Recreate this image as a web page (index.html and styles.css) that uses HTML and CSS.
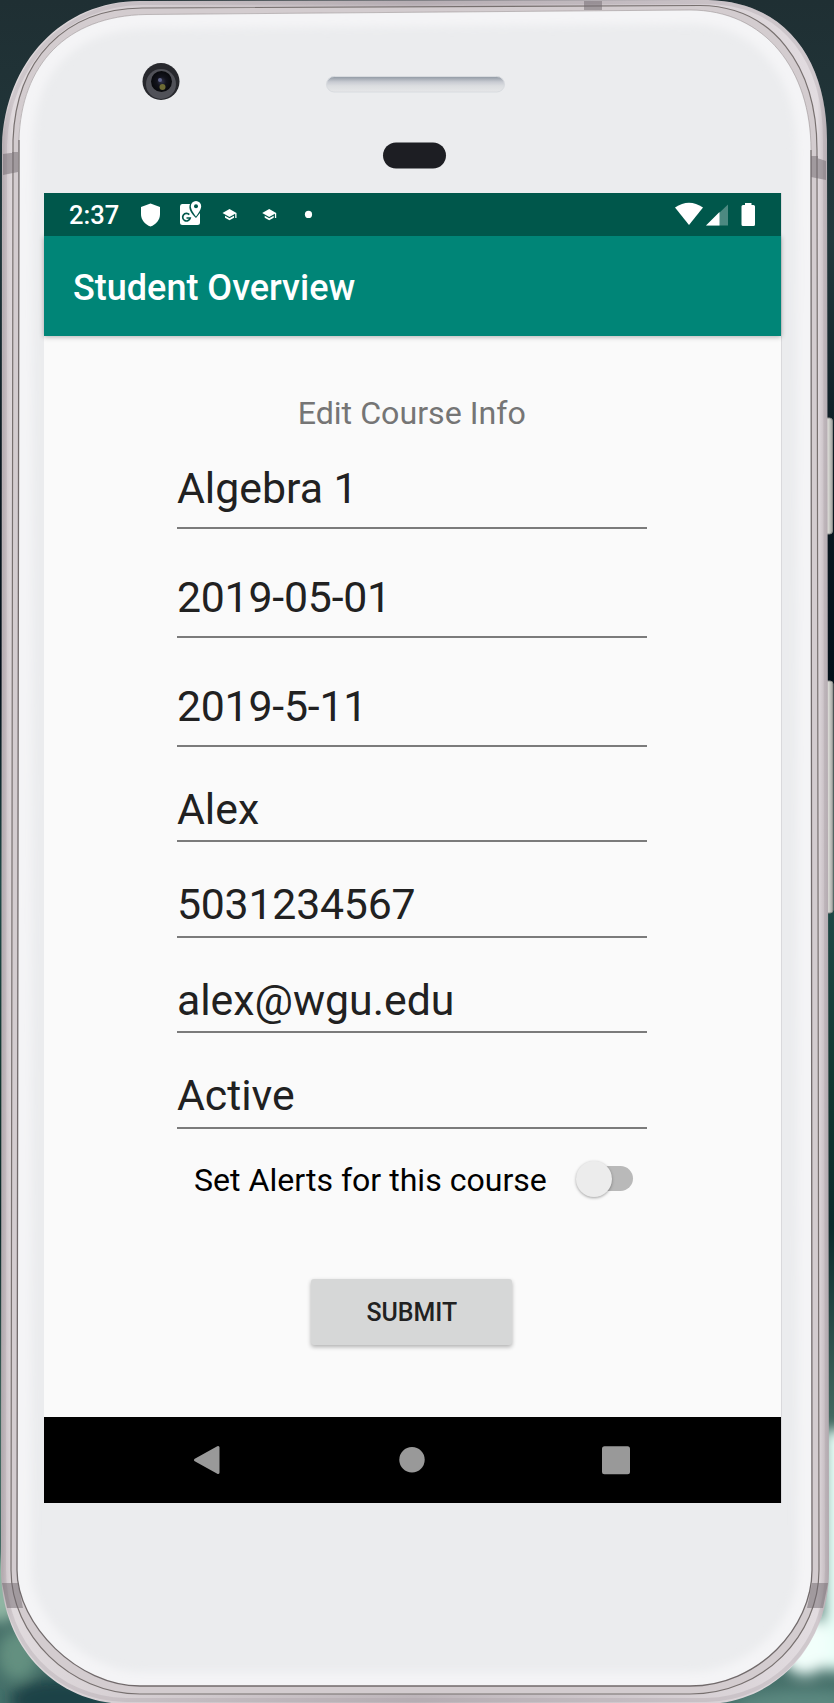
FILE: index.html
```html
<!DOCTYPE html>
<html lang="en">
<head>
<meta charset="utf-8">
<title>Student Overview</title>
<link rel="stylesheet" href="styles.css">
</head>
<body>
<div class="stage">
<svg class="device" width="834" height="1703" viewBox="0 0 834 1703" aria-hidden="true">
  <defs>
    <linearGradient id="wall" x1="0" y1="0" x2="0" y2="1">
      <stop offset="0" stop-color="#1f2f33"/><stop offset=".14" stop-color="#22393d"/><stop offset=".27" stop-color="#0c1a22"/><stop offset=".4" stop-color="#03101a"/>
      <stop offset=".52" stop-color="#204a48"/><stop offset=".64" stop-color="#123630"/><stop offset=".72" stop-color="#0d2a2b"/><stop offset=".83" stop-color="#42675f"/><stop offset="1" stop-color="#45706a"/>
    </linearGradient>
    <linearGradient id="metal" x1="0" y1="0" x2="1" y2="0">
      <stop offset="0" stop-color="#b3a9ad"/><stop offset=".006" stop-color="#cfc7cb"/><stop offset=".014" stop-color="#e0dadd"/><stop offset=".5" stop-color="#bdb5ba"/>
      <stop offset=".986" stop-color="#e2dce0"/><stop offset="1" stop-color="#b9afb4"/>
    </linearGradient>
    <filter id="soft" x="-5%" y="-5%" width="110%" height="110%"><feGaussianBlur stdDeviation="4"/></filter>
    <filter id="blur" x="-50%" y="-50%" width="200%" height="200%"><feGaussianBlur stdDeviation="7"/></filter>
    <linearGradient id="slot" x1="0" y1="0" x2="0" y2="1"><stop offset="0" stop-color="#8f98a2"/><stop offset=".35" stop-color="#c8cbd2"/><stop offset=".6" stop-color="#dbdde0"/><stop offset="1" stop-color="#e6e7e9"/></linearGradient>
    <radialGradient id="lens"><stop offset="0" stop-color="#32344c"/><stop offset=".45" stop-color="#12131c"/><stop offset="1" stop-color="#08090c"/></radialGradient>
    <linearGradient id="key" x1="0" y1="0" x2="1" y2="0"><stop offset="0" stop-color="#bdbcb9"/><stop offset=".5" stop-color="#e4e4df"/><stop offset="1" stop-color="#a2a4a0"/></linearGradient>
    <path id="glass" d="M146 14.500L690 10C765 10 811 70 811 150L812 1570C812 1628 758 1686 690 1686H140C78 1686 17 1625 17 1570L19 140C21 65 66 16 146 14.500Z"/>
    <clipPath id="face"><use href="#glass"/></clipPath>
  </defs>
  <rect width="834" height="1703" fill="url(#wall)"/>
  <g filter="url(#blur)">
    <ellipse cx="0" cy="1590" rx="24" ry="32" fill="#8fb5a3"/>
    <ellipse cx="18" cy="1655" rx="20" ry="25" fill="#639080"/>
    <ellipse cx="60" cy="1700" rx="50" ry="22" fill="#1d4346"/>
    <rect x="824" y="1430" width="30" height="240" fill="#e8fff8"/>
    <ellipse cx="805" cy="1645" rx="26" ry="30" fill="#f2fffb"/>
    <ellipse cx="805" cy="1706" rx="70" ry="16" fill="#5b8880"/>
  </g>
  <rect x="822" y="418" width="10.500" height="116" rx="3" fill="url(#key)" stroke="#8a8b8a"/>
  <rect x="822" y="681" width="11" height="232" rx="3" fill="url(#key)" stroke="#8a8b88"/>
  <path d="M140 1L708 0C790 2 827 65 827 140L829 1570C829 1645 776 1703 706 1704H126C54 1703 1 1645 1 1570L2 145C5 62 62 1 140 1Z" fill="url(#metal)"/>
  <path d="M142 3L708 2C788 4 825 65 825 140L827 1570C827 1644 775 1699 706 1700H126C56 1699 4 1644 4 1570L5 145C8 64 64 4 142 3Z" fill="none" stroke="#a79ca2" stroke-opacity=".3" stroke-width="4"/>
  <path d="M142 8L700 5.500C772 6 817 65 817 150L819 1570C819 1635 764 1694 690 1694H140C70 1694 11 1635 11 1570L13 140C16 60 64 9 142 8Z" fill="#d3cccf" stroke="#77706f" stroke-width="1.200"/>
  <use href="#glass" fill="#ebecee"/>
  <g clip-path="url(#face)"><use href="#glass" fill="none" stroke="#f4f4f6" stroke-width="28" filter="url(#soft)"/></g>
  <path d="M811 150L812 1570C812 1628 758 1686 690 1686H140C78 1686 17 1625 17 1570L19 140" fill="none" stroke="#716a6b" stroke-width="1.300"/>
  <path d="M19 140C21 65 66 16 146 14.500L690 10C765 10 811 70 811 150" fill="none" stroke="#9b9395" stroke-opacity=".6"/>
  <g fill="#6f686d" fill-opacity=".5">
    <path d="M3 154L18 152V172L3 175ZM12 152H18V172H12ZM811 156L826 161V180L811 177ZM811 156H818V177H811ZM584 1H602V10H584ZM584 5H602V10H584Z"/>
    <path d="M2 1583H18L23 1608H7ZM12 1583H18L23 1608H16ZM812 1583H828L823 1608H807ZM812 1583H816L813 1608H807Z"/>
  </g>
  <circle cx="161" cy="81.500" r="18.500" fill="#27282d"/><circle cx="161" cy="84" r="15" fill="#505158"/><circle cx="161.500" cy="81.500" r="10.500" fill="url(#lens)"/>
  <circle cx="160" cy="80" r="2" fill="#60658c"/><circle cx="162.500" cy="87" r="3" fill="#6d6b35"/>
  <rect x="326.500" y="76.500" width="178" height="15.500" rx="7.700" fill="url(#slot)" stroke="#d8dbdf" stroke-width="1"/>
  <rect x="383" y="142.500" width="63" height="26" rx="13" fill="#1d1e23"/>
</svg>
<main class="screen">
  <header class="status">
    <span class="clock">2:37</span>
    <svg class="notices" width="176" height="30" viewBox="0 0 176 30" fill="#fff">
      <path d="M10.500 3.500L20 7V14C20 20 16 24.500 10.500 26.500C5 24.500 1 20 1 14V7Z"/>
      <path d="M42 4H50C48 9 51 13 56 18L60 13V22.500Q60 25 57.500 25H42.500Q40 25 40 22.500V6.500Q40 4 42 4Z"/>
      <path d="M56 1A5.200 5.200 0 0 0 50.800 6.200C50.800 10 56 16.500 56 16.500S61.200 10 61.200 6.200A5.200 5.200 0 0 0 56 1Z"/>
      <circle cx="56" cy="6.200" r="2" fill="#00574b"/>
      <path d="M49.300 14.600A3.800 3.800 0 1 0 50.200 18H46.500" fill="none" stroke="#00574b" stroke-width="1.700"/>
      <g id="cap"><path d="M82.500 13L89.500 9L96.500 13V18H95.200V13.800L89.500 17ZM85 15.800L89.500 18.300L94 15.800V17.800L89.500 20.300L85 17.800Z"/></g>
      <use href="#cap" x="39.700"/>
      <circle cx="168.500" cy="14.400" r="3.600"/>
    </svg>
    <svg class="signals" width="82" height="26" viewBox="0 0 82 26" fill="#fff">
      <path d="M0 5.500Q14 -4 28 5.500L14 23Z"/><path d="M53 2.500V23.500H31Z" fill-opacity=".3"/><path d="M44.500 10V23.500H31Z"/>
      <path d="M70 1H76.500V3H78.500Q80 3 80 4.500V22.500Q80 24 78.500 24H68Q66.500 24 66.500 22.500V4.500Q66.500 3 68 3H70Z"/>
    </svg>
  </header>
  <h1 class="appbar">Student Overview</h1>
  <form class="form">
    <h2 class="heading">Edit Course Info</h2>
    <div class="field first">Algebra 1</div>
    <div class="field tall digits">2019-05-01</div>
    <div class="field tall digits">2019-5-11</div>
    <div class="field">Alex</div>
    <div class="field digits">5031234567</div>
    <div class="field mail">alex@wgu.edu</div>
    <div class="field">Active</div>
    <div class="alerts"><span class="label">Set Alerts for this course</span><span class="switch"><span class="thumb"></span></span></div>
    <button class="submit" type="button">SUBMIT</button>
  </form>
  <nav class="nav">
    <svg width="737" height="86" viewBox="0 0 737 86" fill="#999">
      <path d="M151.500 43L174 30.500V55.500Z" stroke="#999" stroke-width="3" stroke-linejoin="round"/><circle cx="368" cy="42.700" r="12.700"/><rect x="558" y="29.200" width="28" height="28" rx="2.500"/>
    </svg>
  </nav>
</main>
</div>
</body>
</html>
```
FILE: styles.css
```css
* { box-sizing: border-box; }
body { margin: 0; font-family: Roboto, sans-serif; }
.stage { position: relative; width: 834px; height: 1703px; padding: 193px 53px 200px 44px; overflow: hidden; }
.device { position: absolute; inset: 0; }
.screen { position: relative; display: flex; flex-direction: column; width: 737px; height: 1310px; background: #fafafa; box-shadow: 1px 0 0 #d9d9dc; }
.status { z-index: 1; display: flex; align-items: center; flex: 0 0 43px; padding: 0 24px 0 25px; background: #00574b; color: #fff; }
.clock { width: 71px; padding-top: 1px; font-size: 25.5px; font-weight: 500; line-height: 42px; white-space: nowrap; }
.notices { margin-top: 1px; }
.signals { margin-left: auto; }
.appbar { flex: 0 0 100px; height: 100px; margin: 0; padding: 3px 0 0 29px; background: #008577; color: #fff; font-size: 36px; font-weight: 500; line-height: 98px; box-shadow: 0 1px 5px rgba(0, 0, 0, .3); }
.form { display: flex; flex-direction: column; flex: 1; padding: 56.5px 134px 0 132.5px; }
.heading { align-self: center; margin: 0; color: #757575; font-size: 32.2px; font-weight: 400; line-height: 40px; }
.field { display: flex; align-items: flex-end; height: 95.5px; padding: 0 0 6.5px .4px; border-bottom: 2px solid #7b7b7b; color: #212121; font-size: 42.8px; line-height: 50px; white-space: nowrap; }
.field.tall { height: 109px; padding-bottom: 13.5px; }
.field.first { height: 96px; padding-bottom: 13.5px; }
.field.digits { letter-spacing: -.2px; }
.alerts { display: flex; align-items: center; justify-content: space-between; height: 50px; margin-top: 25px; padding: 0 14px 0 17.5px; color: #000; font-size: 32.1px; white-space: nowrap; }
.label { padding-top: 2px; }
.switch { width: 56px; height: 25px; border-radius: 13px; background: #b9b9b9; }
.thumb { display: block; width: 36px; height: 36px; margin: -5px 0 0 -1px; border-radius: 50%; background: #ececec; box-shadow: 0 1px 3px rgba(0, 0, 0, .35); }
.submit { align-self: center; width: 201px; height: 66px; margin-top: 75px; padding-top: 3px; border: 0; border-radius: 3px; background: #d6d7d7; box-shadow: 0 2px 4px rgba(0, 0, 0, .3); color: #212121; font-family: Roboto, sans-serif; font-size: 24.900px; font-weight: 500; }
.nav { flex: 0 0 86px; background: #000; }
.nav svg { display: block; }
```
